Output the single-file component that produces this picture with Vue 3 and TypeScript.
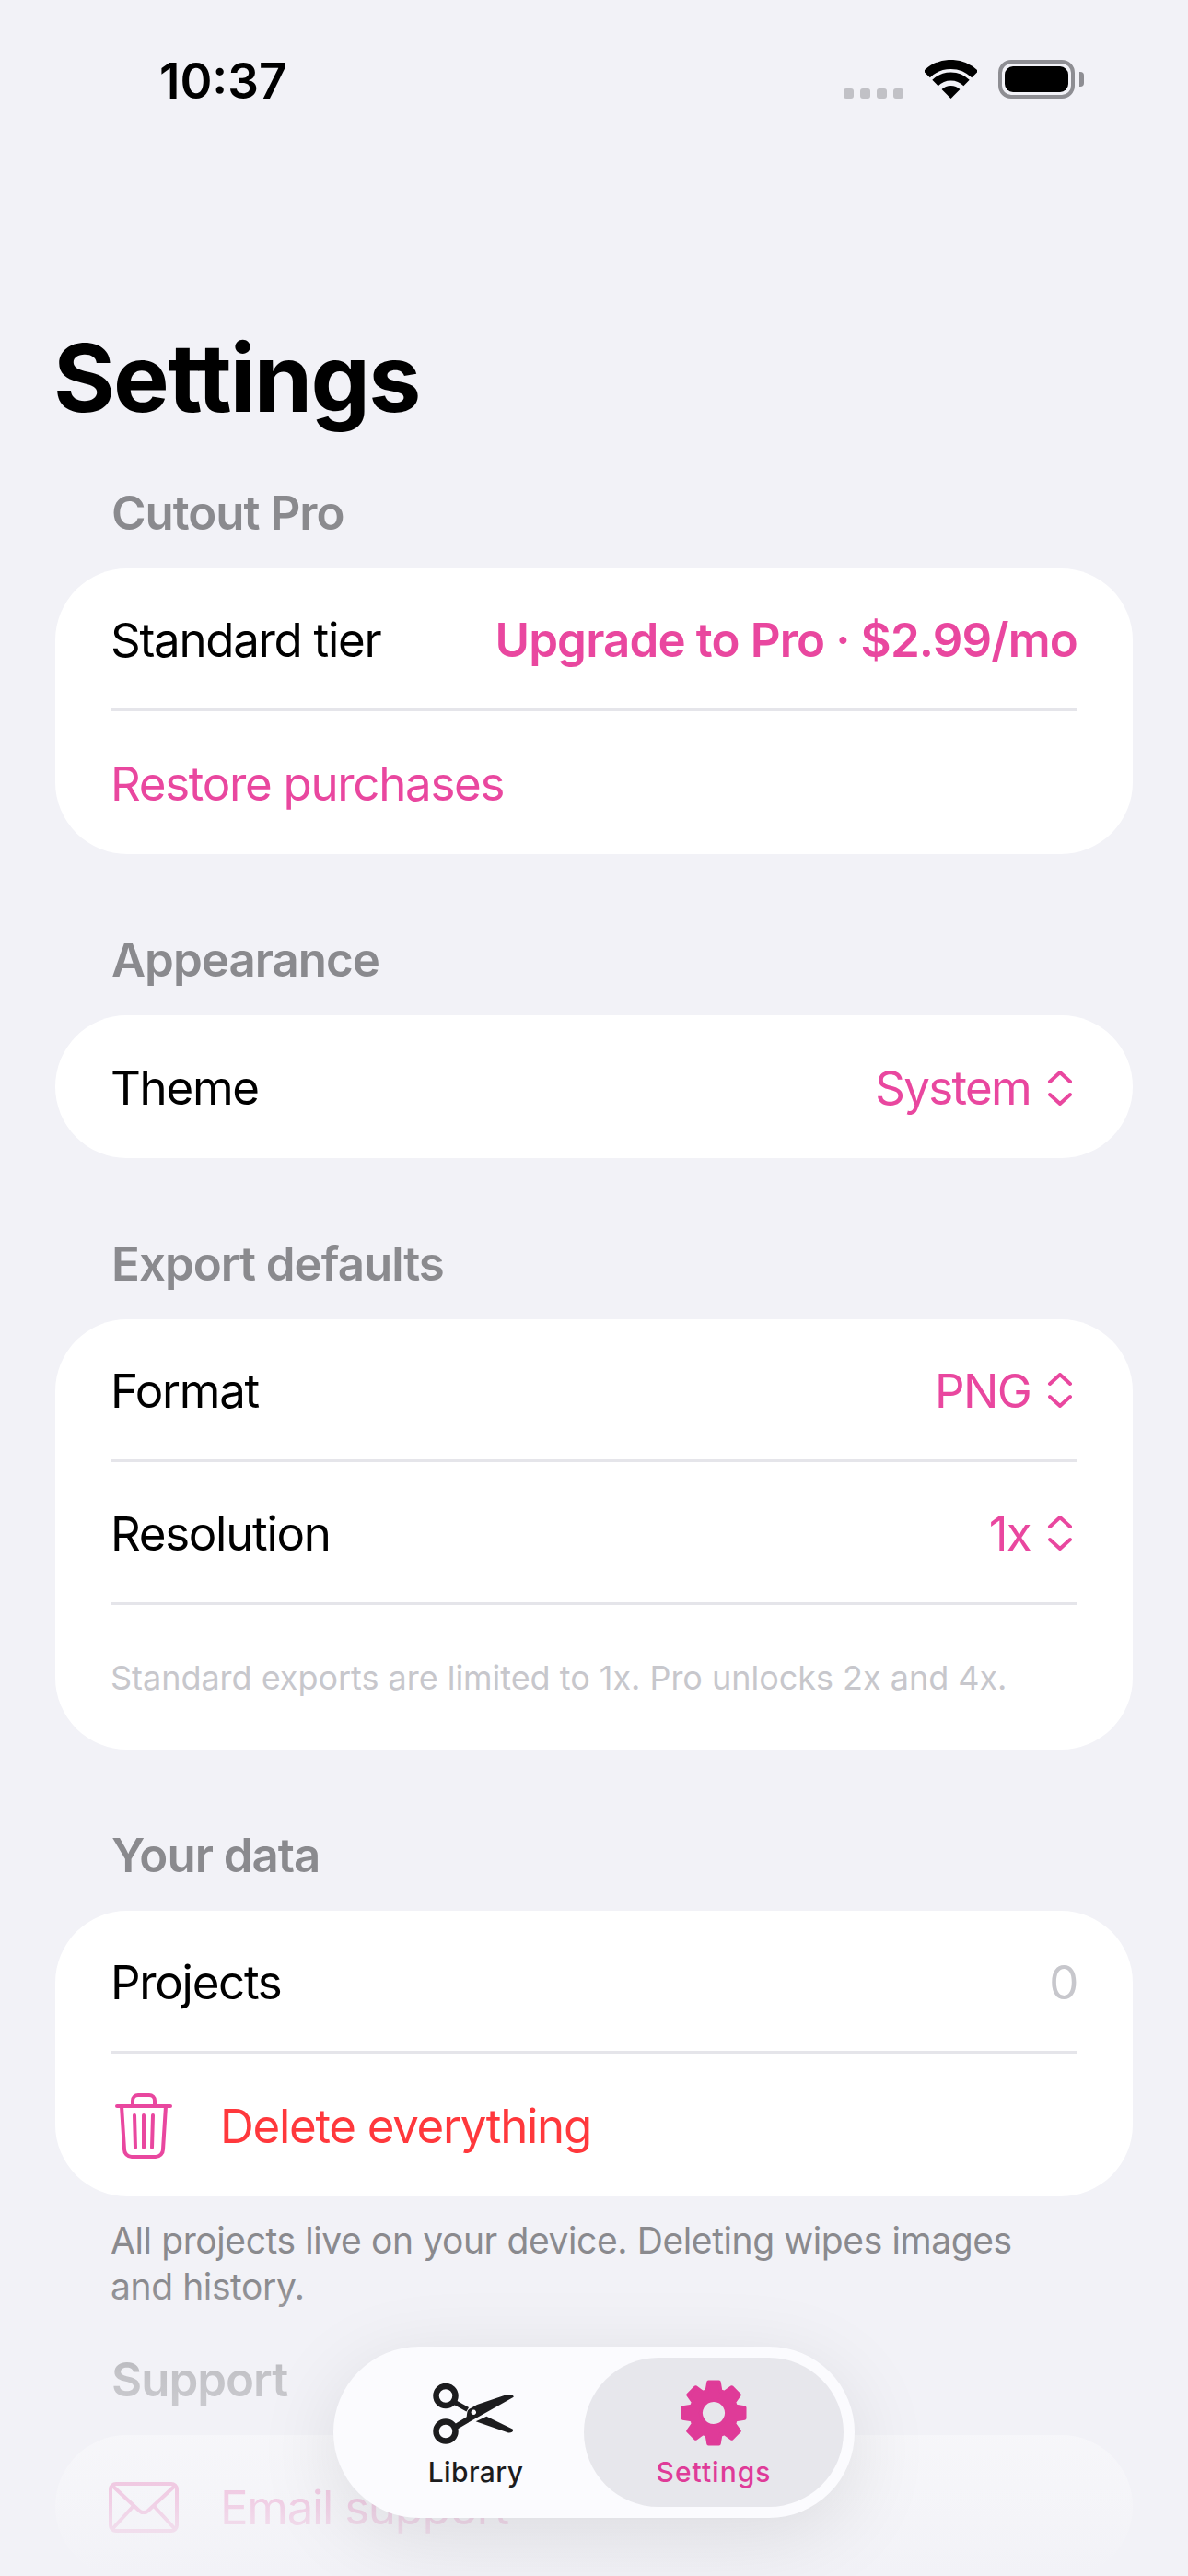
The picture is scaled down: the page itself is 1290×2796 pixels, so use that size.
<template>
  <div class="screen">
    <div class="status">
      <span class="time">10:37</span>
      <div class="statusIcons">
        <div class="dots"><i></i><i></i><i></i><i></i></div>
        <svg class="wifi" width="57" height="42" viewBox="0 0 57 42">
          <path d="M2.3 15.8A37 37 0 0 1 54.7 15.8" fill="none" stroke="#000" stroke-width="10" />
          <path d="M11.5 25A24 24 0 0 1 45.5 25" fill="none" stroke="#000" stroke-width="9" />
          <path d="M28.5 42L18.6 32.1A14 14 0 0 1 38.4 32.1Z" fill="#000" />
        </svg>
        <div class="battery"><div class="batteryFill"></div></div>
        <div class="batteryNub"></div>
      </div>
    </div>

    <h1 class="title">Settings</h1>

    <div class="sectionLabel first">Cutout Pro</div>
    <div class="card">
      <div class="row divided">
        <span>Standard tier</span>
        <span class="pink strong">Upgrade to Pro · $2.99/mo</span>
      </div>
      <div class="row"><span class="pink">Restore purchases</span></div>
    </div>

    <div class="sectionLabel">Appearance</div>
    <div class="card">
      <div class="row">
        <span>Theme</span>
        <span class="picker pink">System
          <svg class="chev" width="28" height="38" viewBox="0 0 28 38"><path d="M3 12L14 2L25 12M3 26L14 36L25 26" /></svg>
        </span>
      </div>
    </div>

    <div class="sectionLabel">Export defaults</div>
    <div class="card">
      <div class="row divided">
        <span>Format</span>
        <span class="picker pink">PNG
          <svg class="chev" width="28" height="38" viewBox="0 0 28 38"><path d="M3 12L14 2L25 12M3 26L14 36L25 26" /></svg>
        </span>
      </div>
      <div class="row divided">
        <span>Resolution</span>
        <span class="picker pink">1x
          <svg class="chev" width="28" height="38" viewBox="0 0 28 38"><path d="M3 12L14 2L25 12M3 26L14 36L25 26" /></svg>
        </span>
      </div>
      <div class="note">Standard exports are limited to 1x. Pro unlocks 2x and 4x.</div>
    </div>

    <div class="sectionLabel">Your data</div>
    <div class="card">
      <div class="row divided">
        <span>Projects</span>
        <span class="muted">0</span>
      </div>
      <div class="row start">
        <svg class="rowIcon" width="62" height="71" viewBox="0 0 62 71" fill="none" stroke="#e9479f" stroke-width="4" stroke-linecap="round" stroke-linejoin="round">
          <path d="M2 14H60" />
          <path d="M19 13V8a6 6 0 0 1 6-6h12a6 6 0 0 1 6 6v5" />
          <path d="M7 14L10 61a8 8 0 0 0 8 8h26a8 8 0 0 0 8-8L55 14" />
          <path d="M21 24L22 59M31 24V59M41 24L40 59" />
        </svg>
        <span class="red">Delete everything</span>
      </div>
    </div>
    <p class="footnote">All projects live on your device. Deleting wipes images and history.</p>

    <div class="sectionLabel support">Support</div>
    <div class="card">
      <div class="row start">
        <svg class="rowIcon" width="76" height="55" viewBox="0 0 76 55" fill="none" stroke="#e9479f" stroke-width="4" stroke-linejoin="round">
          <rect x="2" y="2" width="72" height="51" rx="6" />
          <path d="M4 4L33 31a7 7 0 0 0 10 0L72 4" />
          <path d="M4 51L27 26M72 51L49 26" />
        </svg>
        <span class="pink">Email support</span>
      </div>
    </div>

    <div class="fade"></div>

    <nav class="tabbar">
      <div class="tab">
        <svg class="scissors" width="88" height="66" viewBox="0 0 88 66" fill="#1c1c1e">
          <circle cx="14" cy="13.500" r="10.500" fill="none" stroke="#1c1c1e" stroke-width="6.500" />
          <circle cx="14" cy="52" r="10.500" fill="none" stroke="#1c1c1e" stroke-width="6.500" />
          <path d="M23 17L39 26L36.500 30.500L21 22Z" />
          <path fill-rule="evenodd" d="M24 44L36.700 36.300C37.500 31 37 29 41 27L48 23L79 12.500C84 11 88 12.500 87.700 14.700L43.300 39.700L26 50ZM44.300 28.600a2.700 2.700 0 1 0 0.010 0Z" />
          <path d="M46.700 41.300L58.300 35.700L86.500 49.500C88.500 51 86 54 82 53.500Z" />
        </svg>
        <span class="tabLabel">Library</span>
      </div>
      <div class="tab active">
        <svg width="72" height="72" viewBox="0 0 72 72">
          <path fill-rule="evenodd" :d="gearPath" fill="#df3b98" stroke="#df3b98" stroke-width="4" stroke-linejoin="round" />
        </svg>
        <span class="tabLabel">Settings</span>
      </div>
    </nav>
  </div>
</template>

<script setup lang="ts">
// 8 tooth gear, centre hole cut with evenodd
const gearPoints: string[] = []
for (let i = 0; i < 8; i++) {
  const a = (i * Math.PI) / 4 - Math.PI / 2
  const pts: [number, number][] = [
    [25, a - 0.3],
    [34, a - 0.17],
    [34, a + 0.17],
    [25, a + 0.3],
  ]
  for (const [r, t] of pts) {
    gearPoints.push(`${(36 + r * Math.cos(t)).toFixed(2)} ${(36 + r * Math.sin(t)).toFixed(2)}`)
  }
}
const gearPath = `M${gearPoints.join('L')}Z M36 22a14 14 0 1 0 0.01 0Z`
</script>

<style>
html, body {
  margin: 0;
  background: #f2f2f7;
}
</style>

<style scoped>
.screen {
  position: relative;
  width: 1290px;
  height: 2796px;
  overflow: hidden;
  background: #f2f2f7;
  color: #000;
  font-family: Inter, "Noto Sans", sans-serif;
  font-size: 51px;
  letter-spacing: -1.3px;
}
.status {
  height: 132px;
  display: flex;
  justify-content: space-between;
  padding: 56px 113px 0 173px;
  box-sizing: border-box;
  letter-spacing: 0;
}
.time {
  font-size: 53px;
  font-weight: 600;
  line-height: 64px;
}
.statusIcons {
  display: flex;
  align-items: flex-start;
  margin-top: 9px;
}
.dots {
  display: flex;
  gap: 7px;
  margin: 31px 23px 0 0;
}
.dots i {
  width: 11px;
  height: 11px;
  border-radius: 3px;
  background: #c1c1c6;
}
.wifi {
  margin-right: 23px;
}
.battery {
  width: 83px;
  height: 42px;
  box-sizing: border-box;
  border: 4px solid #8e8e93;
  border-radius: 14px;
  padding: 3px;
}
.batteryFill {
  height: 100%;
  background: #000;
  border-radius: 9px;
}
.batteryNub {
  width: 5px;
  height: 16px;
  margin: 13px 0 0 5px;
  background: #8e8e93;
  border-radius: 0 4px 4px 0;
}
.title {
  margin: 218px 0 0 58px;
  font-size: 102px;
  font-weight: 700;
  line-height: 120px;
  letter-spacing: -1.7px;
}
.sectionLabel {
  margin: 84px 0 29px 121px;
  font-size: 51px;
  font-weight: 600;
  line-height: 62px;
  letter-spacing: -1px;
  color: #8a8a8e;
}
.sectionLabel.first {
  margin-top: 56px;
}
.sectionLabel.support {
  margin-top: 45px;
}
.card {
  margin: 0 60px;
  background: #fff;
  border-radius: 78px;
}
.row {
  height: 155px;
  margin: 0 60px;
  padding-top: 2px;
  display: flex;
  align-items: center;
  justify-content: space-between;
  box-sizing: border-box;
}
.row.divided {
  border-bottom: 3px solid #e5e5ea;
}
.row.start {
  justify-content: flex-start;
}
.rowIcon {
  width: 76px;
  margin: 0 45px 0 -2px;
  flex-shrink: 0;
}
.pink {
  color: #e9479f;
}
.strong {
  font-weight: 600;
  letter-spacing: -0.85px;
}
.red {
  color: #ff383c;
}
.muted {
  color: #c7c7cc;
}
.picker {
  display: flex;
  align-items: center;
  gap: 18px;
  letter-spacing: -1.7px;
}
.chev {
  margin-right: 5px;
}
.chev path {
  fill: none;
  stroke: #e9479f;
  stroke-width: 4;
  stroke-linecap: round;
  stroke-linejoin: round;
}
.note {
  margin: 0 60px;
  height: 157px;
  display: flex;
  align-items: center;
  font-size: 36px;
  letter-spacing: -0.03px;
  color: #c7c7cc;
}
.footnote {
  margin: 23px 140px 0 120px;
  font-size: 39px;
  line-height: 50px;
  letter-spacing: -0.4px;
  color: #8a8a8e;
}
.fade {
  position: absolute;
  left: 0;
  right: 0;
  bottom: 0;
  height: 320px;
  background: linear-gradient(to bottom, rgba(242, 242, 247, 0) 0, rgba(242, 242, 247, 0.55) 100px, rgba(242, 242, 247, 0.8) 240px, #f2f2f7 316px);
}
.tabbar {
  position: absolute;
  left: 362px;
  top: 2547px;
  width: 566px;
  height: 186px;
  box-sizing: border-box;
  padding: 12px;
  display: flex;
  justify-content: space-between;
  background: #fbfbfe;
  border-radius: 93px;
  box-shadow: 0 20px 90px rgba(0, 0, 0, 0.1);
}
.tab {
  width: 259px;
  height: 162px;
  padding: 24px 0 0 26px;
  display: flex;
  flex-direction: column;
  align-items: center;
  box-sizing: border-box;
  color: #1c1c1e;
  letter-spacing: 0.4px;
}
.tab.active {
  width: 282px;
  padding-left: 0;
  background: #e7e7ec;
  border-radius: 81px;
  color: #df3b98;
  letter-spacing: 1px;
}
.scissors {
  margin: 4px 0 2px -5px;
}
.tabLabel {
  font-size: 30px;
  font-weight: 500;
  line-height: 40px;
  margin-top: 8px;
}
</style>
